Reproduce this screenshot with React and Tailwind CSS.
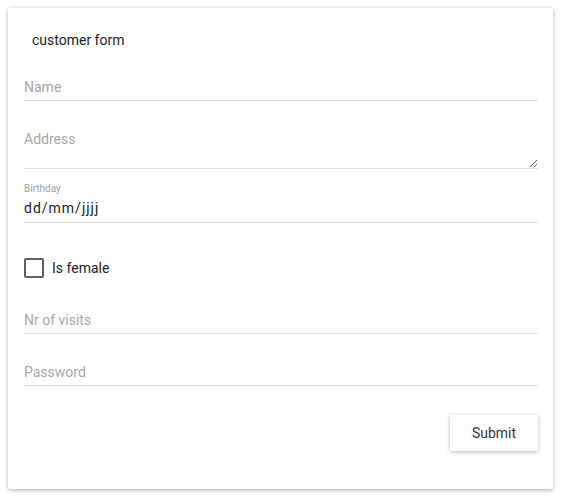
import React from 'react';

const font = { fontFamily: 'Roboto, "Liberation Sans", sans-serif' };

const App = () => {
    return (
        <div className="w-[561px] h-[502px] bg-white p-2" style={font}>
            <div className="w-[545px] h-[481px] bg-white rounded-[2px] shadow-[0_1px_4px_rgba(0,0,0,0.35)] pl-4 pr-[15px] pt-[22px]">
                {/* Title */}
                <div className="pl-2 h-5 leading-5 text-[14px] text-[#212121]">customer form</div>

                {/* Name */}
                <input
                    className="block w-full mt-[27px] h-[24px] pb-[4px] border-b border-[#dedede] text-[14px] text-[#212121] placeholder:text-[#a6a6a6] outline-none"
                    placeholder="Name"
                />

                {/* Address */}
                <textarea
                    className="block w-full mt-[27px] h-[41px] pt-[1px] border-b border-[#dedede] text-[14px] leading-5 text-[#212121] placeholder:text-[#a6a6a6] outline-none"
                    placeholder="Address"
                />

                {/* Birthday */}
                <div className="mt-[14px]">
                    <div className="text-[10px] leading-3 text-[#9e9e9e]">Birthday</div>
                    <div className="h-[28px] pt-[3px] border-b border-[#dedede] text-[14px] leading-5 tracking-[1px] text-[#212121]">dd/mm/jjjj</div>
                </div>

                {/* Checkbox */}
                <label className="flex items-center mt-[35px] h-5">
                    <span className="w-5 h-5 border-2 border-[#5f5f5f] rounded-[2px]" />
                    <span className="ml-2 text-[14px] text-[#212121]">Is female</span>
                </label>

                {/* Nr of visits */}
                <input
                    className="block w-full mt-[32px] h-[24px] pb-[4px] border-b border-[#dedede] text-[14px] text-[#212121] placeholder:text-[#a6a6a6] outline-none"
                    placeholder="Nr of visits"
                />

                {/* Password */}
                <input
                    type="password"
                    className="block w-full mt-[28px] h-[24px] pb-[4px] border-b border-[#dedede] text-[14px] text-[#212121] placeholder:text-[#a6a6a6] outline-none"
                    placeholder="Password"
                />

                <div className="flex justify-end mt-[29px]">
                    <button className="w-[88px] h-[36px] bg-white rounded-[2px] shadow-[0_1px_4px_rgba(0,0,0,0.3)] text-[14px] text-[#333]">
                        Submit
                    </button>
                </div>
            </div>
        </div>
    );
};

export default App;
